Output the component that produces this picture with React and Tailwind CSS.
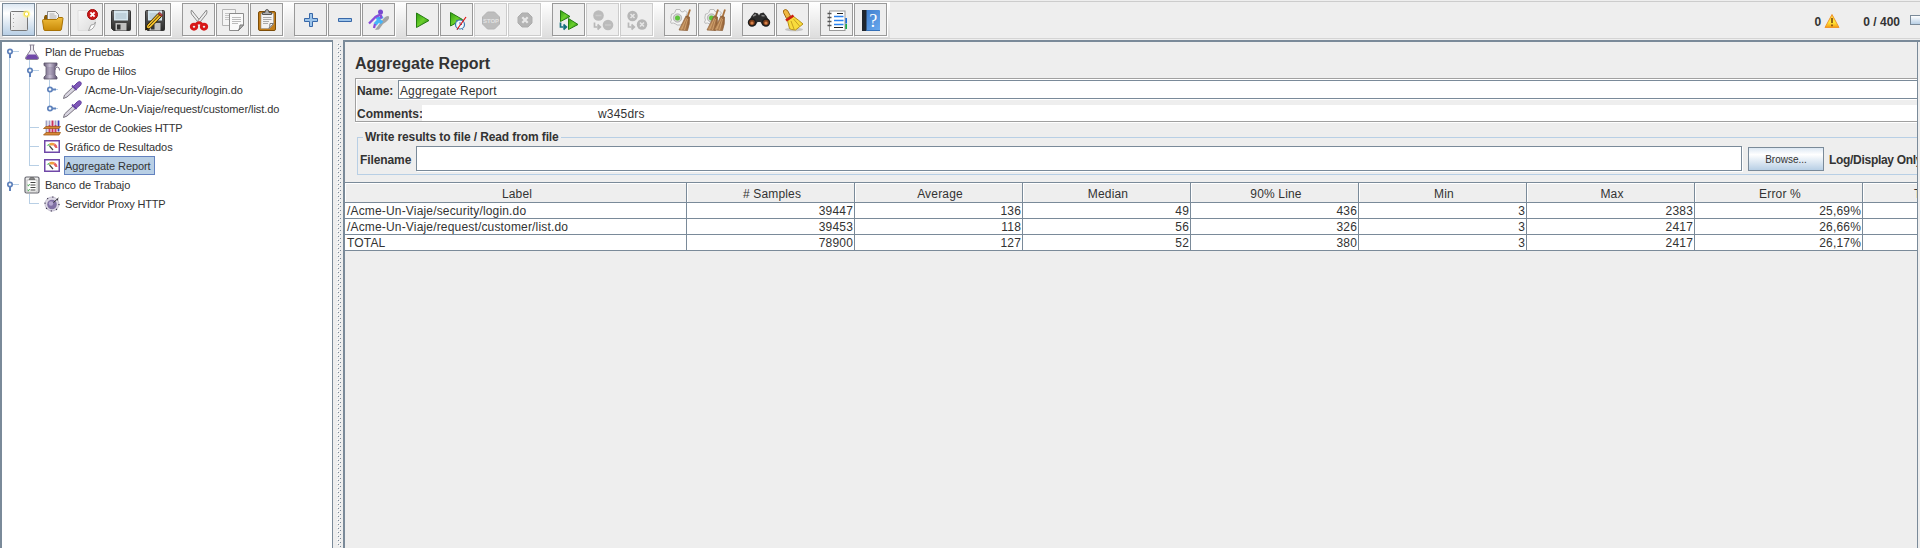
import React from "react";

const LINE = "border-[#7a8a99]";

function Defs() {
  return (
    <svg className="absolute h-0 w-0" aria-hidden="true">
      <defs>
        <linearGradient id="paper" x1="0" y1="0" x2="1" y2="1">
          <stop offset="0" stopColor="#f8f8f8" />
          <stop offset="1" stopColor="#dcdcdc" />
        </linearGradient>
        <linearGradient id="gold" x1="0" y1="0" x2="0" y2="1">
          <stop offset="0" stopColor="#f0bd3c" />
          <stop offset="1" stopColor="#c98a08" />
        </linearGradient>
        <linearGradient id="green" x1="0" y1="0" x2="1" y2="1">
          <stop offset="0" stopColor="#2f9e10" />
          <stop offset="0.5" stopColor="#6bd02c" />
          <stop offset="1" stopColor="#1f7a0c" />
        </linearGradient>
        <linearGradient id="dark" x1="0" y1="0" x2="0" y2="1">
          <stop offset="0" stopColor="#6a6a6a" />
          <stop offset="1" stopColor="#2a2a2a" />
        </linearGradient>
        <linearGradient id="blue" x1="0" y1="0" x2="1" y2="1">
          <stop offset="0" stopColor="#3a78c8" />
          <stop offset="1" stopColor="#69aaf0" />
        </linearGradient>
        <linearGradient id="straw" x1="0" y1="0" x2="1" y2="0">
          <stop offset="0" stopColor="#c99a68" />
          <stop offset="1" stopColor="#946238" />
        </linearGradient>
        <linearGradient id="spool" x1="0" y1="0" x2="1" y2="0">
          <stop offset="0" stopColor="#6a5f7a" />
          <stop offset="0.45" stopColor="#c8bfd4" />
          <stop offset="1" stopColor="#5c5070" />
        </linearGradient>
        <linearGradient id="warn" x1="0" y1="0" x2="0" y2="1">
          <stop offset="0" stopColor="#ffc83a" />
          <stop offset="0.6" stopColor="#ffe93a" />
          <stop offset="1" stopColor="#f59a10" />
        </linearGradient>
      </defs>
    </svg>
  );
}

function Pic({ children, size = 24, className = "" }) {
  return (
    <svg width={size} height={size} viewBox={`0 0 ${size} ${size}`} className={`block shrink-0 ${className}`} fill="none">
      {children}
    </svg>
  );
}

/* ---- toolbar icons, 24 x 24 ---- */

const NewIcon = () => (
  <Pic>
    <rect x="3.500" y="3.500" width="17" height="19" rx="1" fill="url(#paper)" stroke="#777" />
    <path d="M6.500 6v14" stroke="#aaa" strokeDasharray="1 3" />
    <circle cx="19.500" cy="6" r="3.800" fill="#fff27a" opacity=".65" />
    <circle cx="19.500" cy="6" r="2.200" fill="#fff" stroke="#f5de3c" />
  </Pic>
);
const OpenIcon = () => (
  <Pic>
    <path d="M3 12V9l1-2h4l1 2h12v7z" fill="#8a5c08" />
    <path d="M6.500 11.500V3.500h8l3 3v5z" fill="#f4f4f4" stroke="#888" />
    <path d="M8.500 6h5M8.500 8h7M8.500 10h7" stroke="#aaa" />
    <path d="M17 11l2-2h2v2z" fill="#8a5c08" />
    <path d="M1.500 12.500q0-1 1-1h13l2-2h3.500q1 0 1 1L20.500 21q-.3 1.500-1.500 1.500H4q-1 0-1.200-1z" fill="url(#gold)" stroke="#a87204" />
  </Pic>
);
const CloseIcon = () => (
  <Pic>
    <path d="M3 2.500h17.500V15l-6 7.500H3z" fill="url(#paper)" stroke="#dedede" />
    <path d="M20.500 14q-1.500 3.500-4.500 3l-2.500 5.500q6-1 7-8.500z" fill="#fff" stroke="#9a9a9a" strokeWidth=".9" />
    <circle cx="17.500" cy="6.500" r="5" fill="#cc1a1a" stroke="#9e0808" />
    <path d="M15.400 4.400l4.200 4.200M19.600 4.400l-4.200 4.200" stroke="#fff" strokeWidth="1.900" />
  </Pic>
);
const Floppy = () => (
  <>
    <path d="M2.500 3.500q0-1 1-1h17q1 0 1 1v18q0 1-1 1h-16l-2-2z" fill="url(#dark)" stroke="#333" />
    <rect x="5" y="2.500" width="14" height="10" fill="#d6e6ee" />
    <path d="M6.500 6h11M6.500 8h11M6.500 10h11" stroke="#a8bcc8" />
    <rect x="6.500" y="15" width="11" height="7.500" fill="#c0c0c0" />
    <rect x="8" y="16.500" width="3.500" height="5" fill="#333" />
  </>
);
const SaveIcon = () => (
  <Pic>
    <Floppy />
  </Pic>
);
const SaveAsIcon = () => (
  <Pic>
    <Floppy />
    <path d="M2.500 22l1.500-5L15 5.500l3.500 3L7.500 20z" fill="#f3bf2a" stroke="#3b2a08" />
    <path d="M5.500 18.500L16.500 7" stroke="#4b3a10" />
    <path d="M15 5.500l1.500-1.300 3.200 2.800-1.200 1.500z" fill="#b44" stroke="#622" strokeWidth=".7" />
    <path d="M2.500 22l1-3 2 1.800z" fill="#111" />
  </Pic>
);
const CutIcon = () => (
  <Pic>
    <path d="M4.500 2q-1 2 0 4l8 10 2-1.500z" fill="#eee" stroke="#8a8a8a" />
    <path d="M19.500 2q1 2 0 4l-8 10-2-1.500z" fill="#eee" stroke="#8a8a8a" />
    <ellipse cx="7" cy="18.700" rx="2.700" ry="2.500" stroke="#d81818" strokeWidth="2.900" />
    <ellipse cx="17" cy="18.700" rx="2.700" ry="2.500" stroke="#d81818" strokeWidth="2.900" />
    <path d="M9 16l3-1.500 3 1.500" stroke="#d81818" strokeWidth="2.600" />
  </Pic>
);
const CopyIcon = () => (
  <Pic>
    <path d="M1.500 1.500h13v16h-13z" fill="#f4f4f4" stroke="#b4b4b4" />
    <path d="M4 5.500h8M4 7.500h8M4 9.500h5M4 11.500h5" stroke="#c4c4c4" />
    <path d="M8.500 5.500h14V17l-5 5.500h-9z" fill="#fafafa" stroke="#8c8c8c" />
    <path d="M11 9.500h9M11 11.500h9M11 13.500h9M11 15.500h6" stroke="#bbb" />
    <path d="M22.500 17h-3.500q0 3-1.500 5.500z" fill="#bbb" stroke="#777" />
  </Pic>
);
const PasteIcon = () => (
  <Pic>
    <rect x="3.500" y="3.500" width="17" height="19" rx="1.500" fill="#c17d1a" stroke="#7d4d08" />
    <path d="M6 5.500h12.500V16l-4 4.500H6z" fill="#f3f3f3" stroke="#999" strokeWidth=".6" />
    <path d="M8 9.500h8.500M8 11.500h8.500M8 13.500h6M8 15.500h5" stroke="#aaa" />
    <path d="M18.500 15.500h-3.500q0 3-1 5z" fill="#fff" stroke="#777" />
    <path d="M7.500 6.500V4.500h2.500q0-3 2-3t2 3h2.500v2z" fill="#aaa" stroke="#555" />
  </Pic>
);
const PlusIcon = () => (
  <Pic>
    <path d="M10.500 5.500h3v5h5v3h-5v5h-3v-5h-5v-3h5z" fill="#9cc4ea" stroke="#3868a8" />
  </Pic>
);
const MinusIcon = () => (
  <Pic>
    <path d="M5.500 10.500h13v3h-13z" fill="#9cc4ea" stroke="#3868a8" />
  </Pic>
);
const ToggleIcon = () => (
  <Pic>
    <path d="M21.500 8q2 2.500-2.500 6l-3 2-4 5.500-4 .5 5-7 4-5q2.500-2.500 4.500-2z" fill="#a4a4a4" />
    <path d="M9 7.500l3 4.500M8 16.500l4-4.500 3 3" stroke="#46b4f8" strokeWidth="3.600" />
    <path d="M11 9.500q2 1 5-.5" stroke="#3ea2f4" strokeWidth="2.400" />
    <path d="M2 15.500l6.500-6.500 5-2.500M14 6.500v4M8 16l-1 4" stroke="#8a4cd8" strokeWidth="2.300" />
    <circle cx="13.500" cy="4" r="2.500" fill="#7848d0" />
  </Pic>
);
const StartIcon = () => (
  <Pic>
    <path d="M5.500 5v14.500l12.500-7z" fill="url(#green)" stroke="#257c12" />
  </Pic>
);
const StartNoPauseIcon = () => (
  <Pic>
    <path d="M5.500 4.500v13.500l12-6.500z" fill="url(#green)" stroke="#257c12" />
    <circle cx="15" cy="16.500" r="4.500" fill="#f3faff" stroke="#3a78b0" strokeWidth="1.200" />
    <path d="M11 12l2 1.200M19 12l-2 1.200M13 20.500l-1 1.500M17 20.500l1 1.500M15 14v2.500h2" stroke="#3a78b0" />
    <path d="M12 21.500L21 9" stroke="#e01010" strokeWidth="1.200" />
  </Pic>
);
const StopIcon = () => (
  <Pic>
    <path d="M8.500 4h7l5 5v7l-5 5h-7l-5-5V9z" fill="#bdbdbd" stroke="#b4b4b4" />
    <text x="12" y="15" textAnchor="middle" fontFamily="Liberation Sans, sans-serif" fontSize="6" fontWeight="bold" fill="#e2e2e2">STOP</text>
  </Pic>
);
const ShutdownIcon = () => (
  <Pic>
    <path d="M9 5h6l4 4v6l-4 4H9l-4-4V9z" fill="#b4b4b4" stroke="#adadad" />
    <path d="M9.300 9.300l5.400 5.400M14.700 9.300l-5.400 5.400" stroke="#e8e8e8" strokeWidth="2.200" />
  </Pic>
);
const Arrow = ({ color }) => <path d="M3.500 14.500v4.500h5M6.500 16.500l2.800 2.500-2.800 2.500" stroke={color} strokeWidth="1.700" />;
const RemoteStartIcon = () => (
  <Pic>
    <path d="M3.500 2.500v11L13 8.500z" fill="url(#green)" stroke="#257c12" />
    <path d="M11.500 10.500v11l9.500-5z" fill="url(#green)" stroke="#257c12" />
    <Arrow color="#14707e" />
  </Pic>
);
const RemoteStopIcon = () => (
  <Pic>
    <circle cx="7.500" cy="7.500" r="5.300" fill="#bbb" />
    <circle cx="17" cy="17" r="5.300" fill="#bbb" />
    <path d="M4.500 7.500h6M14 17h6" stroke="#cacaca" strokeWidth="1.500" />
    <Arrow color="#b8b8b8" />
  </Pic>
);
const RemoteShutIcon = () => (
  <Pic>
    <circle cx="7.500" cy="8" r="5.200" fill="#b6b6b6" />
    <circle cx="17" cy="16.500" r="5.200" fill="#b6b6b6" />
    <path d="M5.500 6l4 4M9.500 6l-4 4M15 14.500l4 4M19 14.500l-4 4" stroke="#e6e6e6" strokeWidth="1.600" />
    <Arrow color="#b8b8b8" />
  </Pic>
);
const Gear = () => (
  <>
    <path d="M7 1.500h4l1 2 2 .5 2-1.500 2.500 2.500-1.500 2 .8 2 2 1v3l-2 1-1 2.500-4-.5-1 1H8l-1.200-1-2.300-1-2.300.3L1.500 14l1-2-.7-2 .7-4 2-.3 1.500-1.500z" fill="#f4f4f4" stroke="#b4b4b4" strokeWidth=".9" />
    <circle cx="8.500" cy="10" r="4.200" fill="#d0d0d0" stroke="#999" strokeWidth=".6" />
    <circle cx="8.500" cy="10" r="2.500" fill="#5ec43c" />
  </>
);
const Broom = ({ dx = 0 }) => (
  <g transform={`translate(${dx} 0)`}>
    <path d="M21 1.500L18.500 9" stroke="#a8713c" strokeWidth="1.800" />
    <path d="M17 8l3.500 1q.5 7-2 13.500L10 22q4-8 7-14z" fill="url(#straw)" stroke="#8a5a30" strokeWidth=".7" />
    <path d="M17.500 10l-5 11.500M18.500 11l-3 11" stroke="#e0b078" strokeWidth=".7" />
  </g>
);
const ClearIcon = () => (
  <Pic>
    <Gear />
    <Broom />
  </Pic>
);
const ClearAllIcon = () => (
  <Pic>
    <Gear />
    <Broom dx={-6} />
    <Broom dx={1} />
  </Pic>
);
const SearchIcon = () => (
  <Pic>
    <path d="M4.500 8l3-3.500 3.500 1 1 2 1-2 3.500-1 3 3.500 3 6-3 3.500h-4l-2-3.500h-3l-2 3.500h-4l-3-3.500z" fill="#2c2c2c" />
    <path d="M6 8l3-1.500M14.500 7.500l3 .5" stroke="#888" strokeWidth="1.500" />
    <circle cx="5" cy="14.500" r="3.500" fill="#7a3c18" stroke="#1c1c1c" strokeWidth="1.400" />
    <circle cx="19" cy="14.500" r="3.500" fill="#7a3c18" stroke="#1c1c1c" strokeWidth="1.400" />
    <circle cx="5" cy="15" r="1.600" fill="#d8824a" />
    <circle cx="19" cy="15" r="1.600" fill="#d8824a" />
  </Pic>
);
const SearchResetIcon = () => (
  <Pic>
    <ellipse cx="13" cy="21.500" rx="9" ry="1.800" fill="#c4c4c4" />
    <path d="M2.500 2.500q2-2 4 0L9.500 8l-4 2.500-3-6z" fill="#f0b840" stroke="#a06a10" />
    <path d="M6.500 12.500l6-4q5 3.500 9.500 7.500l-7.500 6q-5-.2-6-1.500z" fill="#f8dc3c" stroke="#b89018" />
    <path d="M10 13l3 8M12.500 11l6 7" stroke="#c8a020" />
    <path d="M5 12.500l7.500-5" stroke="#cc2010" strokeWidth="2.600" />
  </Pic>
);
const FunctionIcon = () => (
  <Pic>
    <rect x="19.500" y="10" width="2.500" height="5.500" fill="#1870e0" />
    <rect x="19.500" y="16" width="2.500" height="5" fill="#10b048" />
    <rect x="4.500" y="3" width="15.500" height="19.500" fill="#fff" stroke="#999" />
    <path d="M2.500 5.500h4M2.500 9.500h4M2.500 13.500h4M2.500 17.500h4" stroke="#555" strokeWidth="1.300" />
    <path d="M9 8.500h9.500M9 12.500h9.500M9 16.500h9.500" stroke="#2a82f0" strokeWidth="1.500" />
    <path d="M12 5.500h6M9 19.500h9" stroke="#222" />
  </Pic>
);
const HelpIcon = () => (
  <Pic>
    <rect x="3" y="2" width="18" height="21" rx="1" fill="url(#blue)" />
    <rect x="3" y="2" width="4.500" height="21" fill="#20262e" />
    <path d="M7.500 22.500H21" stroke="#3470b8" />
    <text x="14.200" y="18.500" textAnchor="middle" fontFamily="Liberation Serif, serif" fontSize="18" fill="#fff">?</text>
  </Pic>
);

const TOOL_GROUPS = [
  [{ I: NewIcon, name: "New", active: true }, { I: OpenIcon, name: "Open" }, { I: CloseIcon, name: "Close" }, { I: SaveIcon, name: "Save" }, { I: SaveAsIcon, name: "Save as" }],
  [{ I: CutIcon, name: "Cut" }, { I: CopyIcon, name: "Copy" }, { I: PasteIcon, name: "Paste" }],
  [{ I: PlusIcon, name: "Expand" }, { I: MinusIcon, name: "Collapse" }, { I: ToggleIcon, name: "Toggle" }],
  [{ I: StartIcon, name: "Start" }, { I: StartNoPauseIcon, name: "Start no pauses" }, { I: StopIcon, name: "Stop", off: true }, { I: ShutdownIcon, name: "Shutdown", off: true }],
  [{ I: RemoteStartIcon, name: "Remote start" }, { I: RemoteStopIcon, name: "Remote stop", off: true }, { I: RemoteShutIcon, name: "Remote shutdown", off: true }],
  [{ I: ClearIcon, name: "Clear" }, { I: ClearAllIcon, name: "Clear all" }],
  [{ I: SearchIcon, name: "Search" }, { I: SearchResetIcon, name: "Reset search" }],
  [{ I: FunctionIcon, name: "Functions" }, { I: HelpIcon, name: "Help" }],
];

function ToolButton({ I, name, active, off }) {
  const look = active
    ? "border-[#7a8a99] bg-gradient-to-b from-[#dde8f3] via-white via-30% to-[#b8cfe5]"
    : off
      ? "border-[#cccccc] bg-[#eeeeee]"
      : "border-[#999999] bg-[#eeeeee]";
  return (
    <button aria-label={name} className={`flex h-[33px] w-[33px] shrink-0 items-center justify-center border shadow-[1px_1px_0_#fff] ${look}`}>
      <I />
    </button>
  );
}

function Toolbar() {
  return (
    <header className="flex h-10 shrink-0 flex-col pt-px">
      <div className="flex h-[38px] items-center border-y border-t-[#cccccc] border-b-[#d4d4d4]">
        <div className="flex h-full w-[890px] gap-[11px] bg-gradient-to-b from-white to-[#dddddd] pt-px pl-0.5">
          {TOOL_GROUPS.map((group, i) => (
            <div key={i} className="flex gap-px">
              {group.map((b) => (
                <ToolButton key={b.name} {...b} />
              ))}
            </div>
          ))}
        </div>
        <div className="flex flex-1 items-center justify-end overflow-hidden text-[12px] leading-[14px] font-bold">
          <span className="mt-1">0</span>
          <Pic size={16} className="ml-[3px] mt-px">
            <path d="M8 1.500L15 14.500H1z" fill="url(#warn)" stroke="#f0962c" strokeLinejoin="round" />
            <path d="M8 5v5M8 11.500v1.800" stroke="#7a4a10" strokeWidth="1.600" />
          </Pic>
          <span className="mt-1 ml-[23px] whitespace-pre">0 / 400</span>
          <span className="ml-[10px] h-[10px] w-[10px] border border-r-0 border-[#7a8a99] bg-gradient-to-b from-white to-[#b8cfe5]" />
        </div>
      </div>
    </header>
  );
}

/* ---- tree ---- */

const Flask = () => (
  <Pic size={16}>
    <path d="M5.500 1h5M6.500 1v5L1.500 13.500q-.5 2 1.500 2h10q2 0 1.500-2L9.500 6V1" fill="#eceaf0" stroke="#8a8494" />
    <path d="M4 10.500h8l2 3q.5 1.500-1 1.500H3q-1.500 0-1-1.500z" fill="#7048a8" />
  </Pic>
);
const Spool = () => (
  <Pic size={18}>
    <path d="M1 1h13v2.500l-2 1v8.500l2 2v2H1v-2l2-2V4.500l-2-1z" fill="url(#spool)" stroke="#5c5468" strokeWidth=".8" />
    <path d="M3 6h9M3 8h9M3 10h9M3 12h9" stroke="#857a96" strokeWidth=".7" />
    <path d="M12 8q0-3 2.300-3t2.300 3.500" stroke="#776c84" />
  </Pic>
);
const Dropper = () => (
  <Pic size={20}>
    <path d="M1.500 18.500l1-3.500 9-8.500 2.500 2.500-9 8z" fill="#d8d5e0" stroke="#77727f" />
    <path d="M10 5.500l4.500 4.500" stroke="#6a48a8" strokeWidth="1.800" />
    <path d="M11.500 6.500l4-4q2-1.500 3.200-.4t0 3.200l-4.500 4z" fill="#8058b8" stroke="#6340a0" />
  </Pic>
);
const Cookies = () => (
  <Pic size={18}>
    <path d="M3.500 1.500v13M6.500 1.500v13M12.500 1.500v13" stroke="#a0a0c4" strokeWidth="1.800" />
    <path d="M9.500 1.500v13" stroke="#c83060" strokeWidth="2" />
    <path d="M6.500 6v8M12.500 6v8" stroke="#d03870" strokeWidth="1.800" />
    <path d="M15.500 1.500v11" stroke="#4040b8" strokeWidth="1.800" />
    <path d="M.5 9.500l2.500-2h14.500l-1.500 2zM.5 16l2.500-2.500h14.500L16 16z" fill="#d88838" stroke="#a05c18" strokeWidth=".8" />
  </Pic>
);
const Gauge = () => (
  <svg width="16" height="13" viewBox="0 0 16 13" className="block shrink-0" fill="none">
    <rect x=".75" y=".75" width="14.500" height="11.500" fill="#fff" stroke="#7048a8" strokeWidth="1.500" />
    <path d="M2.500 5.500L5 4l1.500 1.500z" fill="#30a838" />
    <path d="M5 3.500q3-1.500 6 0L9.500 5.500h-3z" fill="#f0a040" />
    <path d="M11 3.500q2.500 1.500 2.500 4.500h-2L9.500 5.500z" fill="#e86060" />
    <path d="M5.500 6l3.500 4" stroke="#444" strokeWidth="1.200" />
  </svg>
);
const Clipboard = () => (
  <svg width="16" height="18" viewBox="0 0 16 18" className="block shrink-0" fill="none">
    <rect x="1" y="1" width="14" height="16" rx="1.500" fill="#eee" stroke="#66666e" strokeWidth="1.200" />
    <rect x="3" y="4" width="10" height="12" fill="#fff" stroke="#999" strokeWidth=".6" />
    <path d="M5 3.500l1.500-2h3l1.500 2z" fill="#888" stroke="#555" strokeWidth=".6" />
    <path d="M6.500 6.500h5M6.500 9h5M6.500 11.500h5M6.500 14h5" stroke="#444" />
    <path d="M3.500 9l1 .8 1-1.600M3.500 14l1 .8 1-1.600" stroke="#2c9c38" />
  </svg>
);
const Proxy = () => (
  <Pic size={16}>
    <circle cx="8" cy="8" r="7" fill="#dcd8e4" stroke="#c4bed0" />
    <circle cx="8" cy="8" r="7" stroke="#35304a" strokeWidth="1.200" strokeDasharray="1.200 4.300" />
    <circle cx="8" cy="8.500" r="4.800" fill="#8070a4" />
    <circle cx="7" cy="7.500" r="2.200" fill="#b4a8d0" />
    <path d="M9.500 6.500l5-4.500" stroke="#333" />
  </Pic>
);

function Handle({ open }) {
  return (
    <svg width="12" height="12" viewBox="0 0 12 12" className="block shrink-0" fill="none">
      {open ? <path d="M6 6.500V12" stroke="#5f82bc" strokeWidth="2" /> : <path d="M7 5.500h5" stroke="#5f82bc" strokeWidth="2" />}
      <circle cx="6" cy="5.500" r="2.200" fill="#fff" stroke="#5f82bc" strokeWidth="1.700" />
    </svg>
  );
}

const TREE = [
  { level: 0, icon: Flask, text: "Plan de Pruebas", handle: "open", tracking: "tracking-[-0.14px]" },
  { level: 1, icon: Spool, text: "Grupo de Hilos", handle: "open", tracking: "tracking-[-0.16px]" },
  { level: 2, icon: Dropper, text: "/Acme-Un-Viaje/security/login.do", handle: "closed", tracking: "tracking-[-0.05px]" },
  { level: 2, icon: Dropper, text: "/Acme-Un-Viaje/request/customer/list.do", handle: "closed", tracking: "tracking-[-0.06px]" },
  { level: 1, icon: Cookies, text: "Gestor de Cookies HTTP", tracking: "tracking-[-0.25px]" },
  { level: 1, icon: Gauge, text: "Gráfico de Resultados", tracking: "tracking-[-0.06px]" },
  { level: 1, icon: Gauge, text: "Aggregate Report", selected: true, tracking: "tracking-[-0.08px]" },
  { level: 0, icon: Clipboard, text: "Banco de Trabajo", handle: "open", tracking: "tracking-[-0.06px]" },
  { level: 1, icon: Proxy, text: "Servidor Proxy HTTP", tracking: "tracking-[-0.18px]" },
];
const INDENT = ["pl-[4px]", "pl-[24px]", "pl-[44px]"];

function Tree() {
  return (
    <nav className={`relative h-full w-[333px] shrink-0 border-t-2 border-r border-l-2 bg-white ${LINE}`}>
      <svg width="60" height="180" className="absolute top-0 left-0" fill="none" stroke="#b8cfe5" shapeRendering="crispEdges">
        <path d="M7.500 9v134M7.500 9.500h9.500M7.500 142.500h9.500" />
        <path d="M27.500 18v106M27.500 28.500h9.500M27.500 85.500h9.500M27.500 104.500h9.500M27.500 123.500h9.500M27.500 152v10M27.500 161.500h9.500" />
        <path d="M47.500 38v29M47.500 47.500h8M47.500 66.500h8" />
      </svg>
      <ul className="relative text-[11px] leading-[19px]">
        {TREE.map((n) => (
          <li key={n.text} className={`flex h-[19px] items-center ${INDENT[n.level]}`}>
            <span className="-ml-0.5 flex w-[18px] shrink-0">{n.handle && <Handle open={n.handle === "open"} />}</span>
            <span className={`mr-px flex w-5 shrink-0 items-center justify-center`}>
              <n.icon />
            </span>
            <span className={`ml-px border whitespace-nowrap ${n.tracking} ${n.selected ? "h-[19px] border-[#6382bf] bg-[#b8cfe5] pr-[3px] leading-[18px]" : "h-[19px] border-transparent leading-[19px]"}`}>
              {n.text}
            </span>
          </li>
        ))}
      </ul>
    </nav>
  );
}

function Divider() {
  return (
    <div className="flex w-[10px] shrink-0 pt-[3px] pl-1">
      <svg width="4" height="504" className="block" shapeRendering="crispEdges">
        <defs>
          <pattern id="bumps" width="4" height="4" patternUnits="userSpaceOnUse">
            <rect x="0" y="0" width="1" height="1" fill="#fff" />
            <rect x="1" y="1" width="1" height="1" fill="#7a8a99" />
            <rect x="2" y="2" width="1" height="1" fill="#fff" />
            <rect x="3" y="3" width="1" height="1" fill="#7a8a99" />
          </pattern>
        </defs>
        <rect width="4" height="504" fill="url(#bumps)" />
      </svg>
    </div>
  );
}

/* ---- report ---- */

const COLS = ["# Samples", "Average", "Median", "90% Line", "Min", "Max", "Error %", "Throughput"];
const ROWS = [
  ["/Acme-Un-Viaje/security/login.do", "39447", "136", "49", "436", "3", "2383", "25,69%", ""],
  ["/Acme-Un-Viaje/request/customer/list.do", "39453", "118", "56", "326", "3", "2417", "26,66%", ""],
  ["TOTAL", "78900", "127", "52", "380", "3", "2417", "26,17%", ""],
];
const GRID = "grid w-[1686px] grid-cols-[342px_repeat(8,168px)]";

function ReportTable() {
  return (
    <div className={`mt-[7px] w-[1686px] border-t text-[12px] tracking-[0.17px] ${LINE}`}>
      <div className={`${GRID} h-5 text-center leading-[22px]`}>
        {["Label", ...COLS].map((c) => (
          <div key={c} className={`h-5 border-r border-b shadow-[inset_1px_1px_0_#fff] ${c === "Throughput" ? "pr-0.5" : "pl-[3px]"} ${LINE}`}>{c}</div>
        ))}
      </div>
      {ROWS.map((r) => (
        <div key={r[0]} className={`${GRID} h-4 bg-white leading-[17px]`}>
          {r.map((v, i) => (
            <div key={i} className={`h-4 border-r border-b ${LINE} ${i === 0 ? "pl-0.5" : "pr-px text-right"}`}>{v}</div>
          ))}
        </div>
      ))}
    </div>
  );
}

function Report() {
  return (
    <main className={`flex h-full w-[1575px] shrink-0 flex-col overflow-hidden border-t-2 border-r border-l-2 ${LINE}`}>
      <div className="flex w-[1700px] flex-1 flex-col">
        <h1 className="h-9 pt-3 pl-[10px] text-[16px] leading-[20px] font-bold">Aggregate Report</h1>
        <div className="ml-[10px] flex h-[44px] flex-col border border-[#a0a0a0] text-[12px] shadow-[inset_1px_1px_0_#fff,0_1px_0_#fff]">
          <div className="flex h-5 pt-px pl-px leading-[22px]">
            <label className="w-[41px] font-bold tracking-[-0.1px]">Name:</label>
            <div className={`h-[19px] flex-1 border bg-white pl-px leading-[20px] tracking-[0.12px] shadow-[0_1px_0_#fff] ${LINE}`}>Aggregate Report</div>
          </div>
          <div className="mt-[6px] flex h-4 pl-px leading-[18px]">
            <label className="w-[65px] font-bold">Comments:</label>
            <div className="h-4 flex-1 bg-white pl-44 tracking-[0.2px]">w345drs</div>
          </div>
        </div>
        <fieldset className="mt-[7px] ml-3 flex h-[46px] border border-[#b8cfe5] px-0.5 text-[12px] font-bold">
          <legend className="ml-[3px] h-4 px-0.5 leading-[16px] tracking-[-0.11px]">Write results to file / Read from file</legend>
          <div className="mt-px flex h-[25px] items-center">
            <label className="mt-0.5 w-14 tracking-[-0.1px]">Filename</label>
            <div className={`h-[25px] w-[1326px] border bg-white shadow-[1px_1px_0_#fff] ${LINE}`} />
            <button className={`ml-[6px] mt-px h-6 w-[76px] border bg-gradient-to-b from-[#dde8f3] via-white via-30% to-[#b8cfe5] pt-px text-[10px] font-normal ${LINE}`}>
              Browse...
            </button>
            <span className="mt-0.5 ml-[5px] whitespace-nowrap tracking-[-0.3px]">Log/Display Only:</span>
          </div>
        </fieldset>
        <ReportTable />
      </div>
    </main>
  );
}

export default function App() {
  return (
    <div className="flex h-[548px] w-[1920px] flex-col overflow-hidden bg-[#eeeeee] font-['Liberation_Sans',Arial,sans-serif] text-[#333333]">
      <Defs />
      <Toolbar />
      <div className="flex min-h-0 flex-1">
        <Tree />
        <Divider />
        <Report />
        <div className={`flex-1 border-t-2 ${LINE}`} />
      </div>
    </div>
  );
}
